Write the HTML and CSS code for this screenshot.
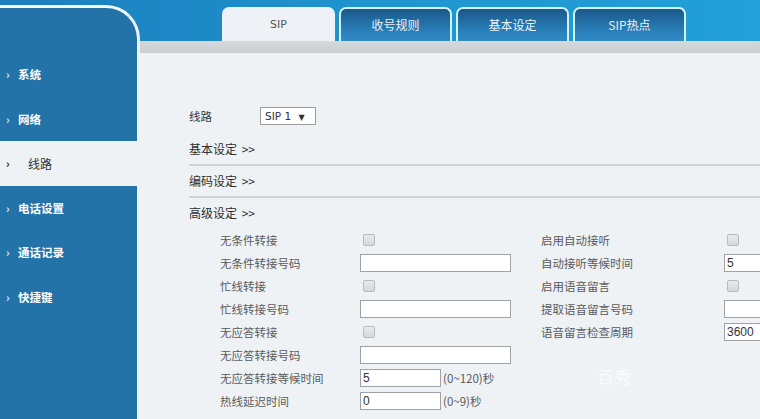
FILE: index.html
```html
<!DOCTYPE html>
<html lang="zh">
<head>
    <meta charset="UTF-8">
    <title>SIP 线路</title>
    <link rel="stylesheet" href="styles.css">
</head>
<body>
    <div class="page">
        <aside class="sidebar">
            <ul class="menu">
                <li><span class="arrow">›</span><span class="name">系统</span></li>
                <li><span class="arrow">›</span><span class="name">网络</span></li>
                <li class="active"><span class="arrow">›</span><span class="name">线路</span></li>
                <li><span class="arrow">›</span><span class="name">电话设置</span></li>
                <li><span class="arrow">›</span><span class="name">通话记录</span></li>
                <li><span class="arrow">›</span><span class="name">快捷键</span></li>
            </ul>
        </aside>

        <div class="main">
            <div class="tabs">
                <div class="tab current">SIP</div>
                <div class="tab">收号规则</div>
                <div class="tab">基本设定</div>
                <div class="tab">SIP热点</div>
            </div>
            <div class="band"></div>

            <div class="content">
                <div class="line-row">
                    <span class="line-label">线路</span>
                    <span class="select">SIP 1 <span class="caret">▼</span></span>
                </div>

                <div class="section">
                    <div class="heading">基本设定 &gt;&gt;</div>
                    <div class="rule"></div>
                </div>
                <div class="section">
                    <div class="heading">编码设定 &gt;&gt;</div>
                    <div class="rule"></div>
                </div>
                <div class="section">
                    <div class="heading">高级设定 &gt;&gt;</div>
                </div>

                <div class="form">
                    <div class="row">
                        <span class="label">无条件转接</span>
                        <span><span class="check"></span></span>
                        <span class="label">启用自动接听</span>
                        <span><span class="check"></span></span>
                    </div>
                    <div class="row">
                        <span class="label">无条件转接号码</span>
                        <span><span class="text"></span></span>
                        <span class="label">自动接听等候时间</span>
                        <span><span class="text narrow">5</span></span>
                    </div>
                    <div class="row">
                        <span class="label">忙线转接</span>
                        <span><span class="check"></span></span>
                        <span class="label">启用语音留言</span>
                        <span><span class="check"></span></span>
                    </div>
                    <div class="row">
                        <span class="label">忙线转接号码</span>
                        <span><span class="text"></span></span>
                        <span class="label">提取语音留言号码</span>
                        <span><span class="text narrow"></span></span>
                    </div>
                    <div class="row">
                        <span class="label">无应答转接</span>
                        <span><span class="check"></span></span>
                        <span class="label">语音留言检查周期</span>
                        <span><span class="text narrow">3600</span></span>
                    </div>
                    <div class="row">
                        <span class="label">无应答转接号码</span>
                        <span><span class="text"></span></span>
                    </div>
                    <div class="row">
                        <span class="label">无应答转接等候时间</span>
                        <span class="with-unit"><span class="text short">5</span><span class="unit">(0~120)秒</span></span>
                    </div>
                    <div class="row">
                        <span class="label">热线延迟时间</span>
                        <span class="with-unit"><span class="text short">0</span><span class="unit">(0~9)秒</span></span>
                    </div>
                </div>

                <div class="watermark">百秀</div>
            </div>
        </div>
    </div>
</body>
</html>
```

FILE: styles.css
```css
html, body {
    margin: 0;
    height: 100%;
    overflow: hidden;
}

body {
    font-family: "Noto Sans CJK SC", "Liberation Sans", sans-serif;
    color: #444;
}

.page {
    display: flex;
    height: 100vh;
    background: linear-gradient(to right, #1b7dbd, #1f95cf 50%, #22a0d8);
}

/* left menu */
.sidebar {
    width: 137px;
    flex-shrink: 0;
    margin-top: 5px;
    background: #2372a8;
    border-top: 3px solid #f2fafd;
    border-right: 3px solid #eaf5fa;
    border-top-right-radius: 34px;
}

.menu {
    list-style: none;
    margin: 0;
    padding: 44px 0 0 0;
}

.menu li {
    height: 44.5px;
    display: flex;
    align-items: center;
    padding-left: 6px;
    color: #fff;
    font-size: 11.5px;
    font-weight: bold;
}

.menu .arrow {
    width: 12px;
    font-size: 11px;
    color: #d8e8f4;
}

.menu .active {
    background: #eef2f5;
    color: #333;
    font-weight: normal;
    font-size: 12px;
}

.menu .active .arrow {
    color: #222;
    font-weight: bold;
}

.menu .active .name {
    padding-left: 10px;
}

/* right side */
.main {
    flex: 1;
    display: flex;
    flex-direction: column;
    min-width: 0;
}

.tabs {
    height: 41px;
    box-sizing: border-box;
    padding: 7px 0 0 82px;
    display: flex;
    gap: 4px;
}

.tab {
    width: 113px;
    height: 34px;
    box-sizing: border-box;
    border: 2px solid #d2f2fb;
    border-bottom: none;
    border-radius: 7px 7px 0 0;
    background: linear-gradient(#1a5888, #2a80bb 70%, #2f8ac6);
    color: #e9f3fa;
    font-size: 12px;
    text-align: center;
    line-height: 32px;
}

.tab.current {
    border-color: #eef2f6;
    background: #eef2f6;
    color: #555;
    font-family: "DejaVu Sans", sans-serif;
    font-size: 11px;
}

.band {
    height: 12px;
    background: linear-gradient(#d7dadc, #c9cdcf);
}

.content {
    flex: 1;
    position: relative;
    background: #eef2f5;
    padding: 53px 0 0 49px;
}

.line-row {
    display: flex;
    align-items: center;
    height: 20px;
    margin-bottom: 8px;
}

.line-label {
    width: 71px;
    font-size: 11.5px;
    color: #333;
}

.select {
    width: 56px;
    height: 18px;
    box-sizing: border-box;
    border: 1px solid #9a9c9e;
    background: #fff;
    font-family: "DejaVu Sans", sans-serif;
    font-size: 10.5px;
    line-height: 16px;
    padding-left: 4px;
    color: #333;
}

.caret {
    font-size: 8px;
    padding-left: 4px;
}

.section {
    padding-top: 7px;
}

.heading {
    height: 16px;
    line-height: 16px;
    font-size: 12px;
    color: #2e2e2e;
    word-spacing: 2px;
}

.rule {
    margin-top: 7px;
    height: 2px;
    background: #cfd3d6;
}

.form {
    margin-top: 7px;
    padding-left: 31px;
}

.row {
    display: grid;
    grid-template-columns: 140px 181px 183px auto;
    height: 23px;
    align-items: center;
}

.label {
    font-size: 11.5px;
    color: #5a5a5a;
}

.check {
    display: block;
    width: 10px;
    height: 10px;
    margin-left: 3px;
    border: 1px solid #b8bbbd;
    border-radius: 2px;
    background: linear-gradient(#e8eaec, #d5d8da);
}

.text {
    display: block;
    width: 151px;
    height: 18px;
    box-sizing: border-box;
    border: 1px solid #9fa2a4;
    background: #fff;
    font-family: "Liberation Sans", sans-serif;
    font-size: 12px;
    line-height: 16px;
    padding-left: 2px;
    color: #333;
}

.text.short {
    width: 81px;
}

.text.narrow {
    width: 60px;
}

.with-unit {
    display: flex;
    align-items: center;
    white-space: nowrap;
}

.unit {
    padding-left: 2px;
    font-size: 11.5px;
    color: #5a5a5a;
}

.watermark {
    position: absolute;
    left: 457px;
    top: 311px;
    font-size: 17px;
    color: rgba(255, 255, 255, 0.75);
}
```
